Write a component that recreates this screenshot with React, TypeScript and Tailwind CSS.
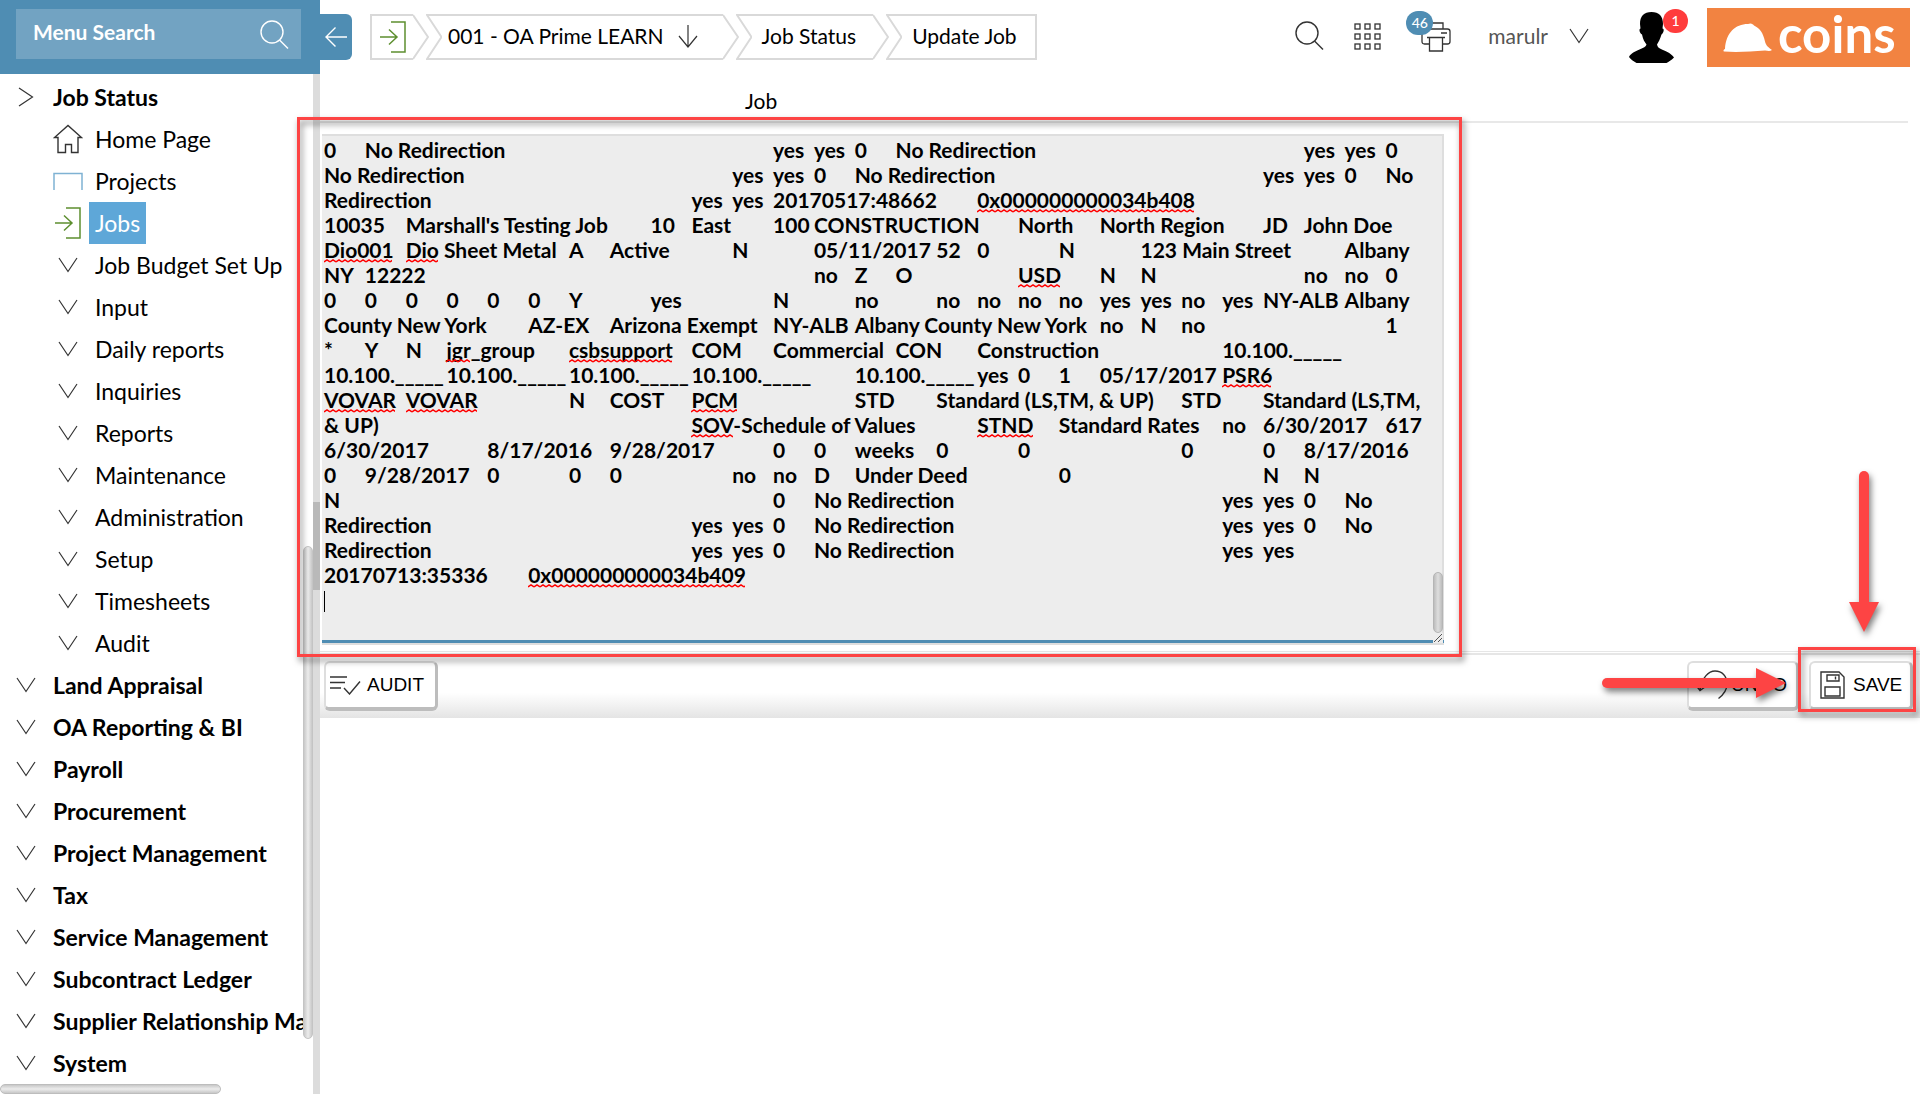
import type { ReactNode } from "react";

const LINE = 25;
const TAB = 40.83;

const notes = [
  "0\tNo Redirection\t\t\t\t\t\t\tyes\tyes\t0\tNo Redirection\t\t\t\t\t\t\tyes\tyes\t0",
  "No Redirection\t\t\t\t\t\t\tyes\tyes\t0\tNo Redirection\t\t\t\t\t\t\tyes\tyes\t0\tNo",
  "Redirection\t\t\t\t\t\t\tyes\tyes\t20170517:48662\t0x000000000034b408",
  "10035\tMarshall's Testing Job\t10\tEast\t100\tCONSTRUCTION\tNorth\tNorth Region\tJD\tJohn Doe",
  "Dio001\tDio Sheet Metal\tA\tActive\t\tN\t\t05/11/2017\t52\t0\t\tN\t\t123 Main Street\t\tAlbany",
  "NY\t12222\t\t\t\t\t\t\t\t\t\tno\tZ\tO\t\t\tUSD\tN\tN\t\t\t\tno\tno\t0",
  "0\t0\t0\t0\t0\t0\tY\t\tyes\t\t\tN\t\tno\t\tno\tno\tno\tno\tyes\tyes\tno\tyes\tNY-ALB\tAlbany",
  "County New York\tAZ-EX\tArizona Exempt\tNY-ALB\tAlbany County New York\tno\tN\tno\t\t\t\t\t1",
  "*\tY\tN\tjgr_group\tcsbsupport\tCOM\tCommercial\tCON\tConstruction\t\t\t10.100._____",
  "10.100._____\t10.100._____\t10.100._____\t10.100._____\t\t10.100._____\tyes\t0\t1\t05/17/2017\tPSR6",
  "VOVAR\tVOVAR\t\t\tN\tCOST\tPCM\t\t\tSTD\tStandard (LS,TM, & UP)\tSTD\tStandard (LS,TM,",
  "& UP)\t\t\t\t\t\t\t\tSOV-Schedule of Values\t\tSTND\tStandard Rates\tno\t6/30/2017\t617",
  "6/30/2017\t\t8/17/2016\t9/28/2017\t\t0\t0\tweeks\t0\t\t0\t\t\t\t0\t\t0\t8/17/2016",
  "0\t9/28/2017\t0\t\t0\t0\t\t\tno\tno\tD\tUnder Deed\t\t\t0\t\t\t\t\tN\tN",
  "N\t\t\t\t\t\t\t\t\t\t\t0\tNo Redirection\t\t\t\t\t\t\tyes\tyes\t0\tNo",
  "Redirection\t\t\t\t\t\t\tyes\tyes\t0\tNo Redirection\t\t\t\t\t\t\tyes\tyes\t0\tNo",
  "Redirection\t\t\t\t\t\t\tyes\tyes\t0\tNo Redirection\t\t\t\t\t\t\tyes\tyes",
  "20170713:35336\t0x000000000034b409",
  "",
].join("\n");

/* line, tab column, width of each word the spell checker flags */
const flagged: [number, number, number][] = [
  [2, 16, 217], [4, 0, 68], [4, 2, 32], [5, 17, 42], [8, 3, 24], [8, 6, 103], [9, 22, 49],
  [10, 0, 71], [10, 2, 71], [10, 9, 46], [11, 9, 42], [11, 16, 56], [17, 5, 217],
];

function Chevron({ className = "" }: { className?: string }) {
  return (
    <svg className={className} width="20" height="16" viewBox="0 0 20 16" fill="none" stroke="#333" strokeWidth="1.2" aria-hidden="true">
      <path d="M1 1l9 13.5L19 1" />
    </svg>
  );
}

function EnterIcon({ className = "" }: { className?: string }) {
  return (
    <svg className={className} width="28" height="32" viewBox="0 0 28 32" fill="none" stroke="#5d8f2f" strokeWidth="1.5" aria-hidden="true">
      <path d="M12 1h14v30H12" />
      <path d="M1 16h17M10 8.500l8 7.500-8 7.500" />
    </svg>
  );
}

function Magnifier({ className = "" }: { className?: string }) {
  return (
    <svg className={className} width="29" height="29" viewBox="0 0 29 29" fill="none" stroke="currentColor" strokeWidth="1.4" aria-hidden="true">
      <circle cx="12" cy="12" r="11" />
      <path d="M19.500 20l8.500 8.500" />
    </svg>
  );
}

const topItemIcon: Record<string, ReactNode> = {
  "Home Page": (
    <svg width="30" height="30" viewBox="0 0 30 30" fill="none" stroke="#333" strokeWidth="1.4" aria-hidden="true">
      <path d="M5 13.500H1.500L15 1.500l13.500 12H25v15h-6.500v-8h-6v8H5z" />
    </svg>
  ),
  Projects: (
    <svg width="30" height="18" viewBox="0 0 30 18" fill="none" stroke="#7fb2d3" strokeWidth="1.5" aria-hidden="true">
      <path d="M1 18V1.500h28V18" />
    </svg>
  ),
  Jobs: <EnterIcon />,
};

const jobItems = [
  "Home Page", "Projects", "Jobs", "Job Budget Set Up", "Input", "Daily reports", "Inquiries",
  "Reports", "Maintenance", "Administration", "Setup", "Timesheets", "Audit",
];
const modules = [
  "Land Appraisal", "OA Reporting & BI", "Payroll", "Procurement", "Project Management", "Tax",
  "Service Management", "Subcontract Ledger", "Supplier Relationship Management", "System",
];

function Sidebar() {
  return (
    <aside className="relative flex w-80 shrink-0 flex-col">
      <div className="h-[74px] shrink-0 bg-[#4f8db3] px-4 pt-[9px] pr-[19px]">
        <label className="flex h-[50px] items-center bg-[#72a3c2] pr-3 pl-[17px] text-white">
          <input
            type="search"
            aria-label="Menu Search"
            placeholder="Menu Search"
            className="min-w-0 flex-1 bg-transparent pb-1 text-[21px] font-bold text-white outline-none placeholder:text-white placeholder:opacity-100"
          />
          <Magnifier />
        </label>
      </div>
      <div className="flex min-h-0 flex-1">
        <nav className="min-w-0 flex-1 overflow-hidden pt-[2px] text-[23px] whitespace-nowrap">
          <a href="#job-status" className="flex h-[42px] items-center font-bold">
            <span className="flex w-[53px] shrink-0 pl-[18px]">
              <svg width="16" height="20" viewBox="0 0 16 20" fill="none" stroke="#333" strokeWidth="1.2" aria-hidden="true">
                <path d="M1 1l13.500 9L1 19" />
              </svg>
            </span>
            Job Status
          </a>
          <ul>
            {jobItems.map((item) => (
              <li key={item}>
                <a href="#job-item" className="flex h-[42px] items-center">
                  <span className="flex w-[89px] shrink-0 justify-end pr-[6px]">
                    <span className="flex w-[30px] justify-center">{topItemIcon[item] ?? <Chevron />}</span>
                  </span>
                  <span className={item === "Jobs" ? "flex h-full items-center bg-[#5ea7d8] px-[6px] text-white" : "px-[6px]"}>{item}</span>
                </a>
              </li>
            ))}
          </ul>
          <ul>
            {modules.map((item) => (
              <li key={item}>
                <a href="#module" className="flex h-[42px] items-center font-bold">
                  <span className="flex w-[53px] shrink-0 pl-4">
                    <Chevron />
                  </span>
                  {item}
                </a>
              </li>
            ))}
          </ul>
        </nav>
        <div className="w-[10px] shrink-0 pt-[472px]">
          <div className="h-[493px] rounded-full border border-[#c4c4c4] bg-linear-to-r from-[#c8c8c8] via-[#ececec] to-[#c8c8c8]" />
        </div>
        <div className="w-[7px] shrink-0 bg-[#dcdcdc] pt-[428px]">
          <div className="h-[88px] bg-[#b9b9b9]" />
        </div>
      </div>
      <div className="absolute bottom-0 left-0 h-[10px] w-[221px] rounded-full border border-[#bdbdbd] bg-linear-to-b from-[#c8c8c8] via-[#ececec] to-[#c8c8c8]" />
    </aside>
  );
}

function Crumb({ first, last, children }: { first?: boolean; last?: boolean; children: ReactNode }) {
  return (
    <li className={first ? "flex h-[46px]" : "-ml-[3px] flex h-[46px]"}>
      {!first && (
        <svg width="16" height="46" viewBox="0 0 16 46" fill="none" stroke="#d9d9d9" strokeWidth="2" aria-hidden="true">
          <path d="M16 1H1l14.500 22L1 45h15" />
        </svg>
      )}
      <a
        href="#crumb"
        className={
          first
            ? "flex items-center border-y-2 border-l-2 border-[#d9d9d9] pl-[7px]"
            : last
              ? "flex items-center border-y-2 border-r-2 border-[#d9d9d9] pr-[18px] pb-[2px] pl-[10px]"
              : "flex items-center gap-[14px] border-y-2 border-[#d9d9d9] pr-[17px] pb-[2px] pl-[6px]"
        }
      >
        {children}
      </a>
      {!last && (
        <svg width="16" height="46" viewBox="0 0 16 46" fill="none" stroke="#d9d9d9" strokeWidth="2" aria-hidden="true">
          <path d="M0 1l15 22L0 45" />
        </svg>
      )}
    </li>
  );
}

function Header() {
  return (
    <header className="flex h-[74px] shrink-0 items-start">
      <button type="button" aria-label="Collapse menu" className="mt-[14px] flex h-[46px] w-8 shrink-0 items-center justify-center rounded-r-md bg-[#4f8db3] text-white">
        <svg width="22" height="20" viewBox="0 0 22 20" fill="none" stroke="currentColor" strokeWidth="1.4" aria-hidden="true">
          <path d="M22 10H1M10.500 .5L1 10l9.500 9.500" />
        </svg>
      </button>
      <ol className="mt-[14px] ml-[18px] flex text-[21px] whitespace-nowrap">
        <Crumb first>
          <EnterIcon />
          <span className="w-[6px]" />
        </Crumb>
        <Crumb>
          <span>001 - OA Prime LEARN</span>
          <svg className="mr-2" width="20" height="30" viewBox="0 0 20 30" fill="none" stroke="#333" strokeWidth="1.2" aria-hidden="true">
            <path d="M10 4v21M1 15l9 11L19 15" />
          </svg>
        </Crumb>
        <Crumb>
          <span className="pl-1">Job Status</span>
        </Crumb>
        <Crumb last>Update Job</Crumb>
      </ol>
      <div className="ml-auto flex items-start">
        <button type="button" aria-label="Search" className="mt-[21px] text-[#333]">
          <Magnifier />
        </button>
        <button type="button" aria-label="Applications" className="mt-[23px] ml-[30px]">
          <svg width="27" height="27" viewBox="0 0 27 27" fill="none" stroke="#333" strokeWidth="1.300" aria-hidden="true">
            {[1, 11, 21].map((y) => [1, 11, 21].map((x) => <rect key={`${x}-${y}`} x={x} y={y} width="5" height="5" />))}
          </svg>
        </button>
        <button type="button" aria-label="Print queue" className="relative mt-[22px] ml-10">
          <svg width="30" height="30" viewBox="0 0 30 30" fill="none" stroke="#333" strokeWidth="1.300" aria-hidden="true">
            <path d="M8 7V1h14v6M8 22H3.500Q1 22 1 19.500V9.500Q1 7 3.500 7h23Q29 7 29 9.500v10q0 2.500-2.500 2.500H22M20 11h6M6 15.500h18M8.500 16v13h13V16" />
          </svg>
          <span className="absolute -top-[11px] -left-[15px] flex h-6 w-[27px] items-center justify-center rounded-full bg-[#4f8db3] text-sm font-medium text-white">46</span>
        </button>
        <button type="button" className="mt-[21px] ml-[37px] flex items-center gap-[21px] text-[21px] leading-[29px] text-[#555]">
          marulr
          <Chevron />
        </button>
        <button type="button" aria-label="Profile" className="relative mt-3 ml-[39px]">
          <svg width="46" height="51" viewBox="0 0 46 51" fill="#000" aria-hidden="true">
            <path d="M12 12C12 4 16 0 23.500 0S35 4 35 12l-.5 4.500c2 0 1.500 4-1 6-1.500 5-3 7.500-4.500 10 .5 2.500 2 4 6 5.500 5 2 8 3.500 11 7.500-3 3-5 4-7.500 5.500H8.500C5 49 3 47.500 1 45c2-4 6-5.500 10.500-7.500 4-1.500 6.500-3 7-5-2-2.500-3.500-5-4.500-10-3-2-3-6-1.500-6z" />
          </svg>
          <span className="absolute -top-[3px] left-[35px] flex h-6 w-[25px] items-center justify-center rounded-full bg-[#ff3c3c] text-sm font-medium text-white">1</span>
        </button>
        <a href="#coins" aria-label="coins" className="mt-2 mr-[10px] ml-[33px] flex h-[59px] w-[203px] items-center bg-[#f28341] pl-4 text-white">
          <svg width="50" height="30" viewBox="0 0 50 30" fill="currentColor" aria-hidden="true">
            <path d="M2 26C3 10 12 1 25 1c3-1.500 5 0 6 1.500 6 3 9 7 11 16 1 4 3 5.500 7 8.500-2 1.500-4 1-7 .5C28 28.500 14 29.500 1 28.500 0 28 .5 26.500 2 26z" />
          </svg>
          <span className="pb-[9px] pl-[5px] text-[51px] leading-none font-bold">coins</span>
        </a>
      </div>
    </header>
  );
}

function NotesField() {
  return (
    <div className="relative z-10 mt-[11px] ml-[2px] flex w-[1122px]">
      <textarea
        aria-labelledby="job-label"
        rows={20}
        wrap="off"
        spellCheck={false}
        defaultValue={notes}
        className="block h-[511px] flex-1 resize-none overflow-hidden border-t-2 border-r-2 border-b-2 border-[#dedede] bg-[#ededed] pt-px pl-[2px] text-[21px] leading-[25px] font-bold text-black [tab-size:8] outline-none"
      />
      <svg className="pointer-events-none absolute top-[3px] left-[2px]" width="1110" height="480" aria-hidden="true">
        <defs>
          <pattern id="wave" width="6" height="4" patternUnits="userSpaceOnUse">
            <path d="M0 3l3-2 3 2" fill="none" stroke="#f00" strokeWidth="1.500" />
          </pattern>
        </defs>
        {flagged.map(([line, col, width]) => (
          <g key={`${line}-${col}`} transform={`translate(${Math.round(col * TAB)} ${line * LINE + 22})`}>
            <rect width={width} height="4" fill="url(#wave)" />
          </g>
        ))}
      </svg>
      <span className="absolute top-[457px] left-[2px] h-[21px] w-px bg-black" />
      <span className="absolute right-0 bottom-[2px] left-0 h-[3px] bg-[#4f8db3]" />
      <span className="absolute right-[1px] bottom-[12px] h-[61px] w-[10px] rounded-full border border-[#b5b5b5] bg-linear-to-r from-[#bdbdbd] via-[#dedede] to-[#bdbdbd]" />
      <svg className="absolute right-[1px] bottom-[2px] bg-[#ededed]" width="10" height="10" viewBox="0 0 10 10" stroke="#555" aria-hidden="true">
        <path d="M1 9l8-8M5 9l4-4" />
      </svg>
      <span className="pointer-events-none absolute -top-[17px] -right-[18px] -bottom-3 -left-[25px] border-[3px] border-[#fd4444] drop-shadow-[2px_4px_3px_rgba(0,0,0,0.5)]" />
    </div>
  );
}

function ToolButton({ children, className }: { children: ReactNode; className: string }) {
  return (
    <button
      type="button"
      className={`flex h-[50px] items-center rounded-md border-t-2 border-r-3 border-b-4 border-l-2 border-t-[#dedede] border-r-[#bdbdbd] border-b-[#bdbdbd] border-l-[#dedede] bg-white pb-px font-['Liberation_Sans',sans-serif] text-[19px] leading-none ${className}`}
    >
      {children}
    </button>
  );
}

function Toolbar() {
  return (
    <div className="relative mt-[6px] border-t border-[#e6e6e6] pt-px">
      <div className="flex h-[65px] items-start border-t-2 border-[#e6e6e6] bg-linear-to-b from-white from-60% to-[#e4e4e4] pt-[6px] pr-[7px] pl-1">
        <ToolButton className="w-[114px] gap-[6px] pl-1">
          <svg width="31" height="20" viewBox="0 0 31 20" fill="none" stroke="#333" strokeWidth="1.400" aria-hidden="true">
            <path d="M0 2h17M0 7.500h15M0 13h11M14 13l5.500 6L30 6.500" />
          </svg>
          AUDIT
        </ToolButton>
        <div className="relative ml-auto">
          <ToolButton className="w-[112px] gap-[2px] pl-[6px]">
            <svg width="34" height="30" viewBox="0 0 34 30" fill="none" stroke="#333" strokeWidth="1.400" aria-hidden="true">
              <path d="M5 20C7 7 14 1 20 1c7 0 12 5 12 13 0 7-4 11-8.500 14.500M0 14l5 6.500 7-5" />
            </svg>
            UNDO
          </ToolButton>
          <svg className="pointer-events-none absolute top-[6px] -left-[87px] drop-shadow-[2px_4px_3px_rgba(0,0,0,0.5)]" width="188" height="32" viewBox="0 0 188 32" aria-hidden="true">
            <path d="M7 16h152" stroke="#fd4444" strokeWidth="10" strokeLinecap="round" />
            <path d="M156 1l30 15-30 15z" fill="#fd4444" />
          </svg>
        </div>
        <div className="relative ml-[10px]">
          <ToolButton className="w-[104px] gap-2 pl-[9px]">
            <svg width="25" height="28" viewBox="0 0 25 28" fill="none" stroke="#333" strokeWidth="1.400" aria-hidden="true">
              <path d="M1 1h18l5 5v21H1zM7 4h12v6H7zM15.500 5.500v3M5 16h15v9H5z" />
            </svg>
            SAVE
          </ToolButton>
          <span className="pointer-events-none absolute -top-[14px] -right-[3px] -bottom-px -left-[11px] border-[3px] border-[#fd4444] drop-shadow-[2px_4px_3px_rgba(0,0,0,0.5)]" />
          <svg className="pointer-events-none absolute -top-[191px] left-[39px] drop-shadow-[2px_4px_3px_rgba(0,0,0,0.5)]" width="32" height="164" viewBox="0 0 32 164" aria-hidden="true">
            <path d="M16 6v130" stroke="#fd4444" strokeWidth="10" strokeLinecap="round" />
            <path d="M1 132h30l-15 30z" fill="#fd4444" />
          </svg>
        </div>
      </div>
    </div>
  );
}

export default function App() {
  return (
    <div className="flex h-screen overflow-hidden bg-white font-[Lato,sans-serif] text-black">
      <Sidebar />
      <main className="flex min-w-0 flex-1 flex-col">
        <Header />
        <div className="mr-3 border-b-2 border-[#e8e8e8] pt-[12px] pb-[6px] pl-[425px] text-[21px] leading-[29px]">
          <span id="job-label">Job</span>
        </div>
        <NotesField />
        <Toolbar />
      </main>
    </div>
  );
}
